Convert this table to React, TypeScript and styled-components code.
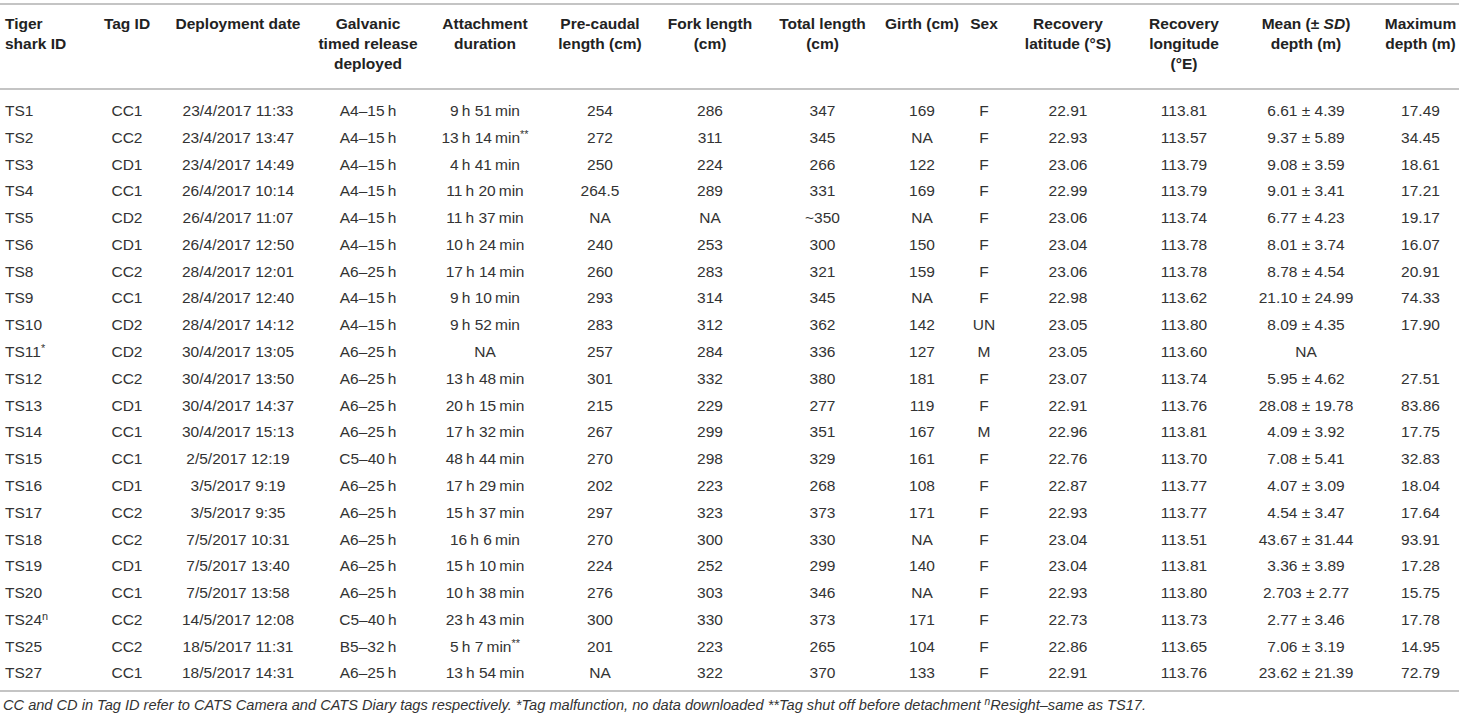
import React from "react";
import styled, { createGlobalStyle } from "styled-components";

const Global = createGlobalStyle`
  html, body { margin: 0; padding: 0; background: #ffffff; }
  body { font-family: "Liberation Sans", Arial, Helvetica, sans-serif; color: #2b2b2b; }
`;

const Wrap = styled.div`
  width: 1457px;
  padding-top: 3px;
`;

const Table = styled.table`
  width: 1457px;
  table-layout: fixed;
  border-collapse: separate;
  border-spacing: 0;
  font-size: 15.5px;
`;

const Th = styled.th<{ $left?: boolean }>`
  font-weight: 700;
  color: #222;
  line-height: 20px;
  vertical-align: top;
  white-space: nowrap;
  text-align: ${(p) => (p.$left ? "left" : "center")};
  padding: 9px 0 14px ${(p) => (p.$left ? "5px" : "0")};
  border-top: 2px solid #c4c4c4;
  border-bottom: 2px solid #c4c4c4;
`;

const Td = styled.td<{ $left?: boolean; $first?: boolean; $last?: boolean }>`
  line-height: 20px;
  color: #333;
  white-space: nowrap;
  text-align: ${(p) => (p.$left ? "left" : "center")};
  padding: ${(p) => (p.$first ? "11px" : "3.4px")} 0
    ${(p) => (p.$last ? "6.4px" : "3.4px")} ${(p) => (p.$left ? "5px" : "0")};
  border-bottom: ${(p) => (p.$last ? "2px solid #c4c4c4" : "none")};
`;

const Sup = styled.sup`
  font-size: 0.7em;
  line-height: 0;
  vertical-align: 0.45em;
`;

const Footnote = styled.p`
  margin: 4px 0 0 3px;
  font-size: 14.6px;
  line-height: 18px;
  font-style: italic;
  color: #333;
  white-space: nowrap;
`;

const widths = [95, 64, 158, 102, 132, 98, 122, 103, 96, 28, 140, 92, 152, 77];

type Row = {
  id: React.ReactNode;
  tag: string;
  date: string;
  rel: string;
  dur: React.ReactNode;
  pre: string;
  fork: string;
  total: string;
  girth: string;
  sex: string;
  lat: string;
  lon: string;
  mean: string;
  max: string;
};

const t = "\u2009";
const pm = (a: string, b: string) => `${a} ± ${b}`;

const rows: Row[] = [
  { id: "TS1", tag: "CC1", date: "23/4/2017 11:33", rel: `A4–15${t}h`, dur: `9${t}h 51${t}min`, pre: "254", fork: "286", total: "347", girth: "169", sex: "F", lat: "22.91", lon: "113.81", mean: pm("6.61", "4.39"), max: "17.49" },
  { id: "TS2", tag: "CC2", date: "23/4/2017 13:47", rel: `A4–15${t}h`, dur: <>{`13${t}h 14${t}min`}<Sup>**</Sup></>, pre: "272", fork: "311", total: "345", girth: "NA", sex: "F", lat: "22.93", lon: "113.57", mean: pm("9.37", "5.89"), max: "34.45" },
  { id: "TS3", tag: "CD1", date: "23/4/2017 14:49", rel: `A4–15${t}h`, dur: `4${t}h 41${t}min`, pre: "250", fork: "224", total: "266", girth: "122", sex: "F", lat: "23.06", lon: "113.79", mean: pm("9.08", "3.59"), max: "18.61" },
  { id: "TS4", tag: "CC1", date: "26/4/2017 10:14", rel: `A4–15${t}h`, dur: `11${t}h 20${t}min`, pre: "264.5", fork: "289", total: "331", girth: "169", sex: "F", lat: "22.99", lon: "113.79", mean: pm("9.01", "3.41"), max: "17.21" },
  { id: "TS5", tag: "CD2", date: "26/4/2017 11:07", rel: `A4–15${t}h`, dur: `11${t}h 37${t}min`, pre: "NA", fork: "NA", total: "~350", girth: "NA", sex: "F", lat: "23.06", lon: "113.74", mean: pm("6.77", "4.23"), max: "19.17" },
  { id: "TS6", tag: "CD1", date: "26/4/2017 12:50", rel: `A4–15${t}h`, dur: `10${t}h 24${t}min`, pre: "240", fork: "253", total: "300", girth: "150", sex: "F", lat: "23.04", lon: "113.78", mean: pm("8.01", "3.74"), max: "16.07" },
  { id: "TS8", tag: "CC2", date: "28/4/2017 12:01", rel: `A6–25${t}h`, dur: `17${t}h 14${t}min`, pre: "260", fork: "283", total: "321", girth: "159", sex: "F", lat: "23.06", lon: "113.78", mean: pm("8.78", "4.54"), max: "20.91" },
  { id: "TS9", tag: "CC1", date: "28/4/2017 12:40", rel: `A4–15${t}h`, dur: `9${t}h 10${t}min`, pre: "293", fork: "314", total: "345", girth: "NA", sex: "F", lat: "22.98", lon: "113.62", mean: pm("21.10", "24.99"), max: "74.33" },
  { id: "TS10", tag: "CD2", date: "28/4/2017 14:12", rel: `A4–15${t}h`, dur: `9${t}h 52${t}min`, pre: "283", fork: "312", total: "362", girth: "142", sex: "UN", lat: "23.05", lon: "113.80", mean: pm("8.09", "4.35"), max: "17.90" },
  { id: <>TS11<Sup>*</Sup></>, tag: "CD2", date: "30/4/2017 13:05", rel: `A6–25${t}h`, dur: "NA", pre: "257", fork: "284", total: "336", girth: "127", sex: "M", lat: "23.05", lon: "113.60", mean: "NA", max: "" },
  { id: "TS12", tag: "CC2", date: "30/4/2017 13:50", rel: `A6–25${t}h`, dur: `13${t}h 48${t}min`, pre: "301", fork: "332", total: "380", girth: "181", sex: "F", lat: "23.07", lon: "113.74", mean: pm("5.95", "4.62"), max: "27.51" },
  { id: "TS13", tag: "CD1", date: "30/4/2017 14:37", rel: `A6–25${t}h`, dur: `20${t}h 15${t}min`, pre: "215", fork: "229", total: "277", girth: "119", sex: "F", lat: "22.91", lon: "113.76", mean: pm("28.08", "19.78"), max: "83.86" },
  { id: "TS14", tag: "CC1", date: "30/4/2017 15:13", rel: `A6–25${t}h`, dur: `17${t}h 32${t}min`, pre: "267", fork: "299", total: "351", girth: "167", sex: "M", lat: "22.96", lon: "113.81", mean: pm("4.09", "3.92"), max: "17.75" },
  { id: "TS15", tag: "CC1", date: "2/5/2017 12:19", rel: `C5–40${t}h`, dur: `48${t}h 44${t}min`, pre: "270", fork: "298", total: "329", girth: "161", sex: "F", lat: "22.76", lon: "113.70", mean: pm("7.08", "5.41"), max: "32.83" },
  { id: "TS16", tag: "CD1", date: "3/5/2017 9:19", rel: `A6–25${t}h`, dur: `17${t}h 29${t}min`, pre: "202", fork: "223", total: "268", girth: "108", sex: "F", lat: "22.87", lon: "113.77", mean: pm("4.07", "3.09"), max: "18.04" },
  { id: "TS17", tag: "CC2", date: "3/5/2017 9:35", rel: `A6–25${t}h`, dur: `15${t}h 37${t}min`, pre: "297", fork: "323", total: "373", girth: "171", sex: "F", lat: "22.93", lon: "113.77", mean: pm("4.54", "3.47"), max: "17.64" },
  { id: "TS18", tag: "CC2", date: "7/5/2017 10:31", rel: `A6–25${t}h`, dur: `16${t}h 6${t}min`, pre: "270", fork: "300", total: "330", girth: "NA", sex: "F", lat: "23.04", lon: "113.51", mean: pm("43.67", "31.44"), max: "93.91" },
  { id: "TS19", tag: "CD1", date: "7/5/2017 13:40", rel: `A6–25${t}h`, dur: `15${t}h 10${t}min`, pre: "224", fork: "252", total: "299", girth: "140", sex: "F", lat: "23.04", lon: "113.81", mean: pm("3.36", "3.89"), max: "17.28" },
  { id: "TS20", tag: "CC1", date: "7/5/2017 13:58", rel: `A6–25${t}h`, dur: `10${t}h 38${t}min`, pre: "276", fork: "303", total: "346", girth: "NA", sex: "F", lat: "22.93", lon: "113.80", mean: pm("2.703", "2.77"), max: "15.75" },
  { id: <>TS24<Sup>n</Sup></>, tag: "CC2", date: "14/5/2017 12:08", rel: `C5–40${t}h`, dur: `23${t}h 43${t}min`, pre: "300", fork: "330", total: "373", girth: "171", sex: "F", lat: "22.73", lon: "113.73", mean: pm("2.77", "3.46"), max: "17.78" },
  { id: "TS25", tag: "CC2", date: "18/5/2017 11:31", rel: `B5–32${t}h`, dur: <>{`5${t}h 7${t}min`}<Sup>**</Sup></>, pre: "201", fork: "223", total: "265", girth: "104", sex: "F", lat: "22.86", lon: "113.65", mean: pm("7.06", "3.19"), max: "14.95" },
  { id: "TS27", tag: "CC1", date: "18/5/2017 14:31", rel: `A6–25${t}h`, dur: `13${t}h 54${t}min`, pre: "NA", fork: "322", total: "370", girth: "133", sex: "F", lat: "22.91", lon: "113.76", mean: pm("23.62", "21.39"), max: "72.79" },
];

const headers: React.ReactNode[] = [
  <>Tiger<br />shark ID</>,
  "Tag ID",
  "Deployment date",
  <>Galvanic<br />timed release<br />deployed</>,
  <>Attachment<br />duration</>,
  <>Pre-caudal<br />length (cm)</>,
  <>Fork length<br />(cm)</>,
  <>Total length<br />(cm)</>,
  "Girth (cm)",
  "Sex",
  <>Recovery<br />latitude (°S)</>,
  <>Recovery<br />longitude<br />(°E)</>,
  <>Mean (± <i>SD</i>)<br />depth (m)</>,
  <>Maximum<br />depth (m)</>,
];

export default function App() {
  return (
    <Wrap>
      <Global />
      <Table>
        <colgroup>
          {widths.map((w, i) => (
            <col key={i} style={{ width: w }} />
          ))}
        </colgroup>
        <thead>
          <tr>
            {headers.map((h, i) => (
              <Th key={i} $left={i === 0}>
                {h}
              </Th>
            ))}
          </tr>
        </thead>
        <tbody>
          {rows.map((r, ri) => {
            const cells = [r.id, r.tag, r.date, r.rel, r.dur, r.pre, r.fork, r.total, r.girth, r.sex, r.lat, r.lon, r.mean, r.max];
            return (
              <tr key={ri}>
                {cells.map((c, ci) => (
                  <Td key={ci} $left={ci === 0} $first={ri === 0} $last={ri === rows.length - 1}>
                    {c}
                  </Td>
                ))}
              </tr>
            );
          })}
        </tbody>
      </Table>
      <Footnote>
        CC and CD in Tag ID refer to CATS Camera and CATS Diary tags respectively. *Tag malfunction, no data downloaded **Tag shut off before detachment <Sup>n</Sup>Resight–same as TS17.
      </Footnote>
    </Wrap>
  );
}
